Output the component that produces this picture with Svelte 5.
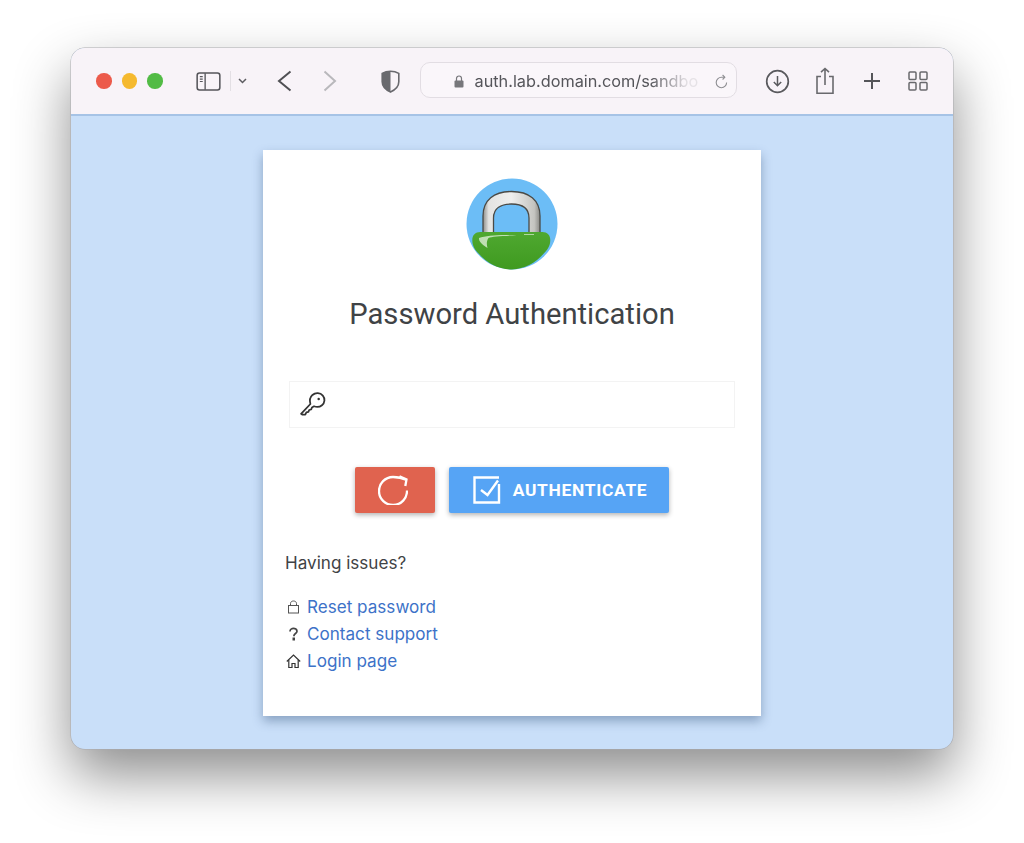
<script>
  const links = [
    { label: 'Reset password', icon: 'lock' },
    { label: 'Contact support', icon: 'help' },
    { label: 'Login page', icon: 'home' }
  ];
</script>

<main class="stage">
  <section class="window">
    <header class="toolbar">
      <div class="lights">
        <span class="light red"></span>
        <span class="light yellow"></span>
        <span class="light green"></span>
      </div>
      <svg class="sidebar" width="25" height="21" viewBox="0 0 26 21" fill="none" stroke="#55555a">
        <rect x="1.2" y="1.7" width="23.600" height="17.600" rx="2.500" stroke-width="1.6" />
        <path d="M9.500 2v17" stroke-width="1.4" />
        <path d="M4 5.500h3M4 8h3M4 10.500h3" stroke-width="1.2" />
      </svg>
      <span class="divider"></span>
      <svg class="chevron" width="9" height="6" viewBox="0 0 9 6" fill="none" stroke="#5c5c60" stroke-width="1.5"><path d="M1 1l3.500 3.500L8 1" /></svg>
      <svg class="back" width="15" height="22" viewBox="0 0 15 22" fill="none" stroke="#505054" stroke-width="2"><path d="M13.500 1.500L2 11l11.500 9.500" /></svg>
      <svg class="forward" width="14" height="22" viewBox="0 0 14 22" fill="none" stroke="#b9b8bc" stroke-width="2"><path d="M1.500 1.500L12 11 1.500 20.500" /></svg>
      <svg class="shield" width="19" height="23" viewBox="0 0 19 23">
        <path d="M9.500 1.200C12.500 1.200 15.500 2 17.800 3.400v8.400c0 4.800-3.400 8-8.300 10.200C4.600 19.800 1.200 16.600 1.200 11.800V3.400C3.500 2 6.500 1.200 9.500 1.200z" fill="#f8f3f8" stroke="#69696e" stroke-width="1.6" />
        <path d="M9.500 1.200C6.500 1.200 3.500 2 1.200 3.400v8.400c0 4.800 3.400 8 8.300 10.200z" fill="#69696e" />
      </svg>
      <div class="address">
        <svg width="10" height="13" viewBox="0 0 10 13" fill="#77777b"><rect x=".5" y="5.500" width="9" height="7" rx="1" /><path d="M2.500 6V3.500a2.500 2.500 0 0 1 5 0V6" fill="none" stroke="#77777b" stroke-width="1.2" /></svg>
        <span class="url">auth.lab.domain.com/sandbo</span>
        <svg class="reload" width="13" height="15" viewBox="0 0 13 15" fill="none" stroke="#8e8e92" stroke-width="1.1"><path d="M11.600 8.500A5.200 5.200 0 1 1 6.400 3.300h3" /><path d="M7.600 1l2.200 2.300-2.200 2.200" /></svg>
      </div>
      <div class="actions">
        <svg class="download" width="25" height="25" viewBox="0 0 25 25" fill="none" stroke="#5a5a5e"><circle cx="12.500" cy="12.500" r="10.800" stroke-width="1.7" /><path d="M12.500 7v9.500M8.800 13l3.700 3.700 3.700-3.700" stroke-width="1.5" /></svg>
        <svg class="share" width="20" height="28" viewBox="0 0 20 28" fill="none" stroke="#69696d" stroke-width="1.6"><path d="M6 9.500H2v16.700h16V9.500h-4" /><path d="M10 18V1.500M6 5.200l4-3.700 4 3.700" /></svg>
        <svg class="plus" width="18" height="18" viewBox="0 0 18 18" fill="none" stroke="#555559" stroke-width="2"><path d="M9 1v16M1 9h16" /></svg>
        <svg class="tabs" width="20" height="20" viewBox="0 0 20 20" fill="none" stroke="#69696d" stroke-width="1.5"><rect x="1" y="1" width="7" height="7.500" rx="1" /><rect x="12" y="1" width="7" height="7.500" rx="1" /><rect x="1" y="11.500" width="7" height="7.500" rx="1" /><rect x="12" y="11.500" width="7" height="7.500" rx="1" /></svg>
      </div>
    </header>

    <div class="content">
      <article class="card">
        <svg class="logo" width="92" height="92" viewBox="0 0 92 92">
          <defs>
            <linearGradient id="shackle" x1="0" x2="1" y1="0" y2="0">
              <stop offset="0" stop-color="#8e8e8a" />
              <stop offset=".1" stop-color="#e4e4e2" />
              <stop offset=".5" stop-color="#efefee" />
              <stop offset=".9" stop-color="#c4c4c0" />
              <stop offset="1" stop-color="#8a8a86" />
            </linearGradient>
            <linearGradient id="body" x1="0" x2="0" y1="0" y2="1">
              <stop offset="0" stop-color="#4fa830" />
              <stop offset="1" stop-color="#3f9a20" />
            </linearGradient>
          </defs>
          <circle cx="46" cy="46" r="45.500" fill="#6cbdf6" />
          <path d="M17 56V38C17 22 28 13.500 45.500 13.500S74 22 74 38v18H63V40c0-10-7-14-17.500-14S27.500 30 27.500 40v16z" fill="url(#shackle)" stroke="#4a4a46" stroke-width="1.300" />
          <path d="M6.300 62c0-5 3-8 8-8h62c5 0 8 3 8 8 0 6-3 10-7 14A45.500 45.500 0 0 1 46 91.500 45.500 45.500 0 0 1 13 76C9 72 6.300 68 6.300 62z" fill="url(#body)" />
          <path d="M13 60c8-2.500 22-3.500 38-2.500-14 .5-25 1-28.500 2.500-2 3-2 6-1 10-4-2.500-9-6-8.500-10z" fill="#dceed4" opacity=".8" />
          <path d="M58 56.500h10" stroke="#dceed4" stroke-width="1" opacity=".7" />
        </svg>
        <h1>Password Authentication</h1>

        <div class="field">
          <svg width="29" height="29" viewBox="0 0 28 28" fill="none" stroke="#333" stroke-width="1.700">
            <path d="M2 23l9-9.500c-1-3.500-.2-6.700 2-8.700 3-2.600 7.500-2.300 10 .6 2.400 2.800 2 7-.8 9.300-2.200 1.800-5 2.100-7.700 1l-2 1.200-.7 1.900-2 .5-.7 1.900-2 .5-1 2H3z" stroke-linejoin="round" />
            <circle cx="19" cy="8.800" r="1.200" fill="#333" stroke="none" />
          </svg>
          <input type="password" aria-label="Password" />
        </div>

        <div class="buttons">
          <button class="reset" aria-label="Reset">
            <svg width="30" height="30" viewBox="0 0 30 30" fill="none" stroke="#fff" stroke-width="2.300"><path d="M29 15.500A14 14 0 1 1 15 2c5 0 9 .8 13 2.800" /><path d="M21.500 1.200L28.500 4.500 27.300 11" /></svg>
          </button>
          <button class="auth">
            <svg width="28" height="28" viewBox="0 0 28 28" fill="none" stroke="#fff"><path d="M26 8v18.500H1.500V1.500H26" stroke-width="2.400" /><path d="M8 14l6.500 5L25 4.500" stroke-width="2.400" /></svg>
            AUTHENTICATE
          </button>
        </div>

        <div class="help">
          <p>Having issues?</p>
          <ul>
            {#each links as link}
              <li>
                <span class="link-icon">
                  {#if link.icon === 'lock'}
                    <svg width="13" height="14" viewBox="0 0 13 14" fill="none" stroke="#555" stroke-width="1"><rect x="1.500" y="5.500" width="10" height="7.500" /><path d="M3.500 5.500V3.500C3.500 2 4.800 1 6.500 1s3 1 3 2.500v2" /></svg>
                  {:else if link.icon === 'help'}
                    <svg width="13" height="14" viewBox="0 0 13 14" fill="none" stroke="#444" stroke-width="1.700"><path d="M3 4.500C3 2.500 5 1.300 6.500 1.300s3.500 1 3.500 3c0 2-2.500 2.200-3 4v1" /><path d="M5.500 10.500h2.500v3H5.500z" fill="#444" stroke="none" /></svg>
                  {:else}
                    <svg width="15" height="14" viewBox="0 0 15 14" fill="none" stroke="#333" stroke-width="1.200"><path d="M.8 7.500L7.500 1l6.700 6.500" /><path d="M2.800 6v7.500h3.200V9.500h3v4h3.200V6" /></svg>
                  {/if}
                </span>
                <a href="#top">{link.label}</a>
              </li>
            {/each}
          </ul>
        </div>
      </article>
    </div>
  </section>
</main>

<style>
  :global(body) { margin: 0; background: #fff; }
  .stage { box-sizing: border-box; width: 1024px; height: 843px; padding: 48px 71px 0; overflow: hidden; }
  .window {
    width: 882px; height: 701px; border-radius: 14px; overflow: hidden;
    display: flex; flex-direction: column; background: #c9dff9;
    box-shadow: 0 0 0 .5px #a9a9ad, 0 26px 55px rgba(0,0,0,.45);
  }
  .toolbar {
    box-sizing: border-box; height: 68px; flex: none; display: flex; align-items: center;
    padding: 0 0 0 25px; background: #f8f3f8; border-bottom: 2px solid #a6c3e6;
  }
  .lights { display: flex; gap: 10px; }
  .light { width: 15.500px; height: 15.500px; border-radius: 50%; }
  .red { background: #ec5a4b; }
  .yellow { background: #f5b92f; }
  .green { background: #52bb45; }
  .sidebar { margin-left: 33px; }
  .divider { width: 1px; height: 20px; margin-left: 9px; background: #e3dfe4; }
  .chevron { margin-left: 7px; }
  .back { margin-left: 30px; }
  .forward { margin-left: 31px; }
  .shield { margin-left: 44px; }
  .address {
    box-sizing: border-box; width: 317px; height: 36px; margin: 0 0 2px 20px; padding: 2px 8px 0 33px;
    display: flex; align-items: center; gap: 11px;
    border: 1px solid #e2dde3; border-radius: 10px; background: #faf6fa;
    font: 16.300px Inter, sans-serif; color: #55555a;
  }
  .url {
    width: 224px; white-space: nowrap; overflow: hidden;
    -webkit-mask-image: linear-gradient(90deg, #000 78%, rgba(0,0,0,.12) 95%);
    mask-image: linear-gradient(90deg, #000 78%, rgba(0,0,0,.12) 95%);
  }
  .reload { margin-left: auto; }
  .actions { display: flex; align-items: center; margin-left: 28px; }
  .share { margin-left: 25px; }
  .plus { margin-left: 28px; }
  .tabs { margin-left: 27px; }
  .content { flex: 1; display: flex; justify-content: center; padding-top: 34px; }
  .card {
    box-sizing: border-box; width: 498px; height: 566px; padding-top: 28px;
    display: flex; flex-direction: column; align-items: center; background: #fff;
    box-shadow: 0 5px 10px rgba(40,70,110,.4);
  }
  .logo { display: block; }
  h1 {
    margin: 24px 0 0; font: 400 29.200px/40px Roboto, sans-serif; color: #3f4346;
  }
  .field {
    box-sizing: border-box; width: 446px; height: 47px; margin-top: 47px; padding-left: 9px;
    display: flex; align-items: center; border: 1px solid #f3f3f3;
  }
  .field input { flex: 1; min-width: 0; border: 0; outline: 0; background: transparent; }
  .buttons { display: flex; gap: 14px; margin-top: 39px; }
  button {
    height: 46px; border: 0; border-radius: 2px; display: flex; align-items: center; justify-content: center;
    color: #fff; box-shadow: 0 2px 5px rgba(0,0,0,.3); padding: 0;
  }
  .reset { width: 80px; background: #e0634f; }
  .reset svg { margin-left: -4px; }
  .auth {
    width: 220px; gap: 12px; padding-left: 2px; background: #56a4f5;
    font: 700 17.400px Roboto, sans-serif; letter-spacing: .7px;
  }
  .help { align-self: flex-start; margin: 36px 0 0 22px; font: 17.100px/27px Inter, sans-serif; color: #3f4346; }
  p { margin: 0 0 17px; }
  ul { margin: 0; padding: 0; list-style: none; }
  li { display: flex; align-items: center; }
  .link-icon { width: 22px; display: flex; justify-content: center; padding-right: 5px; box-sizing: border-box; }
  a { color: #3d72c8; text-decoration: none; }
</style>
